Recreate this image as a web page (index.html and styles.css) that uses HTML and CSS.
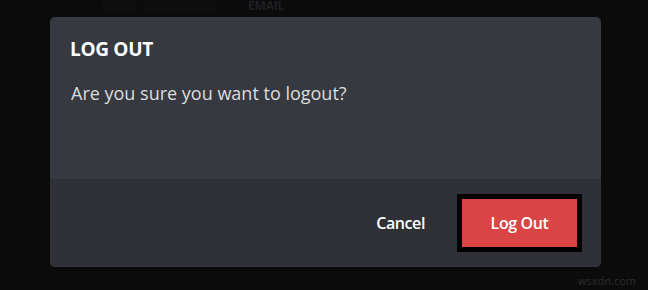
FILE: index.html
```html
<!DOCTYPE html>
<html>
<head>
<meta charset="utf-8">
<link rel="stylesheet" href="styles.css">
</head>
<body>
<div class="backdrop">
  <div class="bg-top"><span class="bg-blob"></span><span class="bg-blob2"></span><span class="bg-label">EMAIL</span></div>
  <div class="modal">
    <div class="modal-body">
      <h2 class="title">LOG OUT</h2>
      <p class="message">Are you sure you want to logout?</p>
    </div>
    <div class="modal-footer">
      <button class="btn-cancel">Cancel</button>
      <span class="btn-outline"><button class="btn-logout">Log Out</button></span>
    </div>
  </div>
  <div class="watermark">wsxdn.com</div>
</div>
</body>
</html>
```
FILE: styles.css
```css
* { box-sizing: border-box; }
html, body { margin: 0; padding: 0; }
body {
  width: 648px;
  height: 290px;
  background: #0b0b0c;
  font-family: "Open Sans", "Lato", sans-serif;
  overflow: hidden;
}
.backdrop {
  position: relative;
  width: 648px;
  height: 290px;
  padding: 17px 0 0 50px;
}
.bg-top {
  position: absolute;
  left: 0; top: 0;
  width: 648px;
  height: 17px;
}
.bg-blob {
  position: absolute;
  left: 102px; top: 0;
  width: 34px; height: 14px;
  background: #0e0e0f;
  border-radius: 0 0 4px 4px;
}
.bg-blob2 {
  position: absolute;
  left: 145px; top: 0;
  width: 70px; height: 12px;
  background: #0d0d0e;
}
.bg-label {
  position: absolute;
  left: 248px; top: 0;
  font-size: 12px;
  line-height: 12px;
  font-weight: 700;
  color: #1f2023;
  letter-spacing: -0.2px;
}
.modal {
  width: 551px;
  height: 250px;
  border-radius: 5px;
  overflow: hidden;
  display: flex;
  flex-direction: column;
  background: #36393f;
}
.modal-body {
  height: 162px;
  padding: 20px 20px 0 20px;
}
.title {
  margin: 0;
  font-size: 19px;
  font-weight: 700;
  color: #ffffff;
  line-height: 24px;
  letter-spacing: -0.3px;
}
.message {
  margin: 20px 0 0 1px;
  font-size: 18px;
  color: #dcddde;
  line-height: 24px;
}
.modal-footer {
  flex: 1;
  background: #2f3136;
  display: flex;
  align-items: center;
  justify-content: flex-end;
  padding: 0 19px 0 0;
}
.btn-cancel {
  background: none;
  border: none;
  font-family: inherit;
  font-size: 16px;
  font-weight: 600;
  color: #ffffff;
  padding: 0;
  margin-right: 32px;
  letter-spacing: -0.4px;
}
.btn-outline {
  display: block;
  border: 5px solid #000;
  background: #000;
}
.btn-logout {
  display: block;
  width: 115px;
  height: 48px;
  border: none;
  background: #d94445;
  color: #fff;
  font-family: inherit;
  font-size: 16px;
  font-weight: 600;
  letter-spacing: -0.4px;
}
.watermark {
  position: absolute;
  right: 12px;
  bottom: 2px;
  font-size: 11px;
  color: #2b2b2e;
}
```
